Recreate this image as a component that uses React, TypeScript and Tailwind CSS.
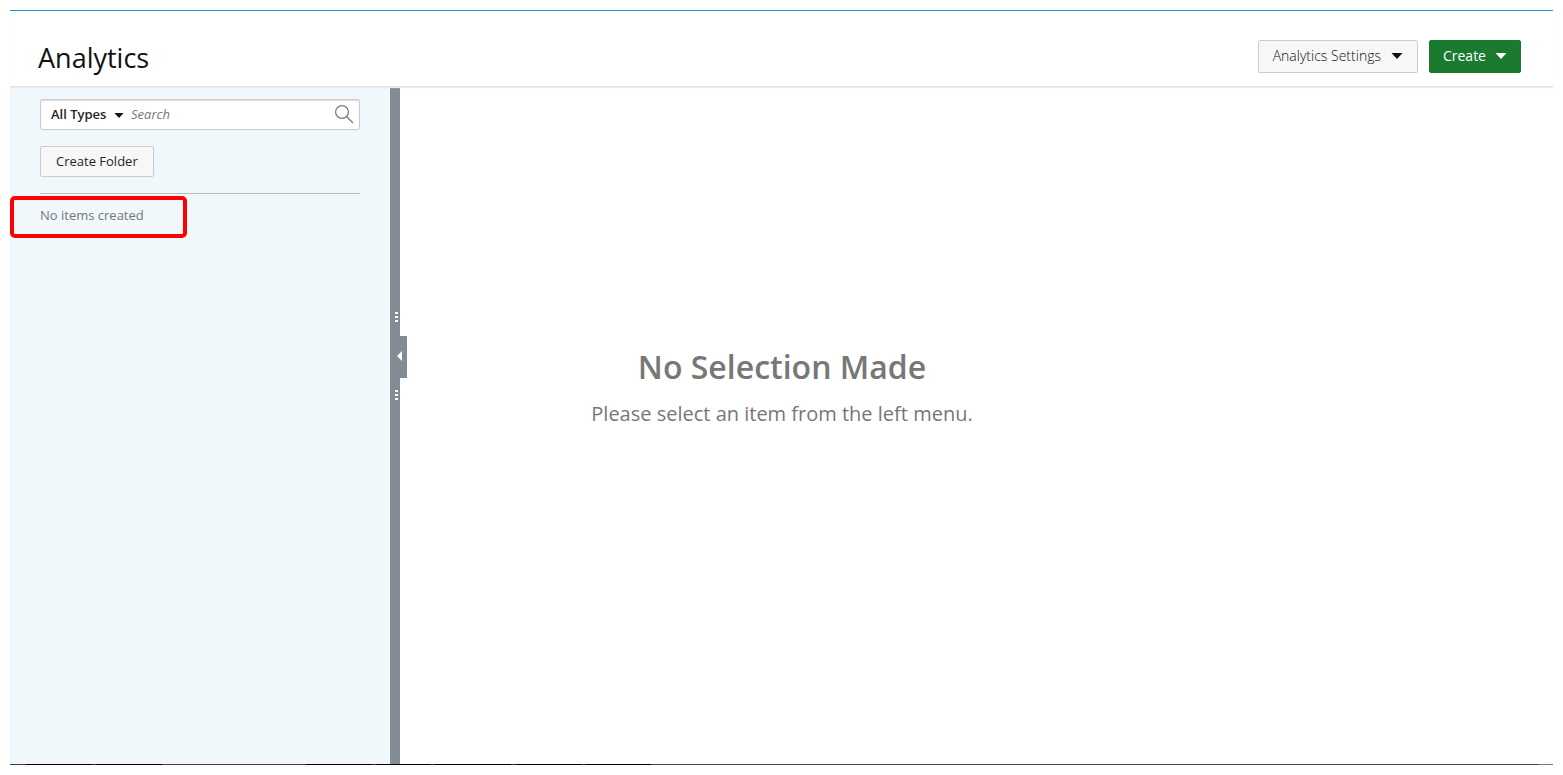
import { useState } from 'react';

const TYPES = ['All Types'];

// Strip of taskbar tabs peeking out under the page
const TASKBAR_SEGMENTS = [
  { className: 'w-[16px] bg-[#41424e]' },
  { className: 'w-[66px] bg-[#020206]' },
  { className: 'w-[4px] bg-[#2c2d36]' },
  { className: 'w-[66px] bg-[#020206]' },
  { className: 'w-[144px] bg-[#41424e]' },
  { className: 'w-[66px] bg-[#020206]' },
  { className: 'w-[4px] bg-[#2c2d36]' },
  { className: 'w-[54px] bg-[#020206]' },
  { className: 'w-[5px] bg-[#2c2d36]' },
  { className: 'w-[76px] bg-[#020206]' },
  { className: 'w-[5px] bg-[#2c2d36]' },
  { className: 'w-[65px] bg-[#020206]' },
  { className: 'w-[5px] bg-[#2c2d36]' },
  { className: 'w-[65px] bg-[#020206]' },
  { className: 'flex-1 bg-[#424450]' },
  { className: 'w-[14px] bg-[#6b7c8c]' },
];

function CaretDown({ className }: { className?: string }) {
  return (
    <svg viewBox="0 0 12 6" className={className} fill="currentColor" aria-hidden="true">
      <path d="M0.5 0h11L6 6z" />
    </svg>
  );
}

function GripDots() {
  return (
    <span className="flex flex-col items-center gap-[2px] pl-[3px]">
      <span className="h-[2px] w-[3px] bg-white" />
      <span className="h-[2px] w-[3px] bg-white" />
      <span className="h-[2px] w-[3px] bg-white" />
    </span>
  );
}

function Header() {
  return (
    <header className="relative z-10 flex h-[77px] items-center justify-between border-t border-b border-t-[#1c9ad6] border-b-[#e4e4e4] bg-white pr-8 pl-7 shadow-[0_1px_1px_#ececec]">
      <h1 className="pt-[18px] text-[27px] leading-9 text-[#111111]">Analytics</h1>
      <div className="flex gap-[11px] pt-4 text-[14px]">
        <button
          type="button"
          className="flex h-[33px] items-center gap-[10px] rounded-xs border border-[#cccccc] bg-[#f7f7f7] px-[14px] pb-[2px] font-light text-[#111111]"
        >
          Analytics Settings
          <CaretDown className="h-[6px] w-[12px] text-[#111111]" />
        </button>
        <button
          type="button"
          className="flex h-[33px] items-center gap-[9px] rounded-xs border border-[#1a7b30] bg-[#1a7b30] px-[13px] pb-[2px] text-white"
        >
          Create
          <CaretDown className="h-[6px] w-[12px]" />
        </button>
      </div>
    </header>
  );
}

function Sidebar() {
  const [type, setType] = useState(TYPES[0]);
  const [query, setQuery] = useState('');

  return (
    <aside className="relative w-[380px] shrink-0 bg-[#f0f8fc] px-[30px] pt-3 text-[13px]">
      <div className="flex h-[31px] items-center rounded-xs border border-[#cccccc] bg-white pt-px pr-[5px] pl-[10px] shadow-[inset_0_1px_1px_#dddddd]">
        <select
          aria-label="Item type"
          value={type}
          onChange={(e) => setType(e.target.value)}
          className="w-[58px] appearance-none bg-transparent font-semibold text-[#262626] outline-none"
        >
          {TYPES.map((t) => (
            <option key={t}>{t}</option>
          ))}
        </select>
        <CaretDown className="ml-[5px] h-[5px] w-[10px] shrink-0 text-[#111111]" />
        <input
          type="text"
          aria-label="Search"
          placeholder="Search"
          value={query}
          onChange={(e) => setQuery(e.target.value)}
          className="ml-[7px] min-w-0 flex-1 outline-none placeholder:text-[#777777] placeholder:italic"
        />
        <button type="button" aria-label="Run search" className="text-[#777777]">
          <svg viewBox="0 0 20 20" className="h-5 w-5" fill="none" stroke="currentColor" strokeWidth="1.2">
            <circle cx="8" cy="7" r="6.4" />
            <path d="M12.5 11.5l6.5 6.5" />
          </svg>
        </button>
      </div>

      <button
        type="button"
        className="mt-4 h-[31px] rounded-xs border border-[#cccccc] bg-[#f7f7f7] px-[15px] text-[#262626]"
      >
        Create Folder
      </button>

      <hr className="mt-4 border-[#bbbbbb]" />
      <p className="mt-[11px] leading-5 text-[#777777]">No items created</p>

      {/* Callout around the empty state */}
      <div className="pointer-events-none absolute top-[109px] left-0 h-[42px] w-[177px] rounded-[5px] border-4 border-[#ff0000]" />
    </aside>
  );
}

function Splitter() {
  return (
    <div className="relative w-[10px] shrink-0 bg-[#838b94]">
      <button
        type="button"
        aria-label="Collapse panel"
        className="absolute top-[225px] left-0 flex w-[17px] flex-col"
      >
        <span className="flex w-[10px] justify-center pb-[14px]">
          <GripDots />
        </span>
        <span className="flex h-[42px] w-[17px] items-center bg-[#838b94] pb-[2px] pl-[7px]">
          <svg viewBox="0 0 5 10" className="h-[10px] w-[5px]" fill="#ffffff">
            <path d="M5 0v10L0 5z" />
          </svg>
        </span>
        <span className="flex w-[10px] justify-center pt-[12px]">
          <GripDots />
        </span>
      </button>
    </div>
  );
}

export default function App() {
  return (
    <div className="flex min-h-screen flex-col bg-white p-[10px] font-['Open_Sans','Noto_Sans',sans-serif]">
      <Header />
      <div className="flex flex-1">
        <Sidebar />
        <Splitter />
        <main className="flex-1 pt-[258px] pr-[389px] text-center text-[#777777]">
          <h2 className="text-[32px] leading-[44px] font-semibold">No Selection Made</h2>
          <p className="mt-[11px] text-[20px] leading-7">Please select an item from the left menu.</p>
        </main>
      </div>
      <div className="flex h-px">
        {TASKBAR_SEGMENTS.map((segment, i) => (
          <span key={i} className={segment.className} />
        ))}
      </div>
    </div>
  );
}
